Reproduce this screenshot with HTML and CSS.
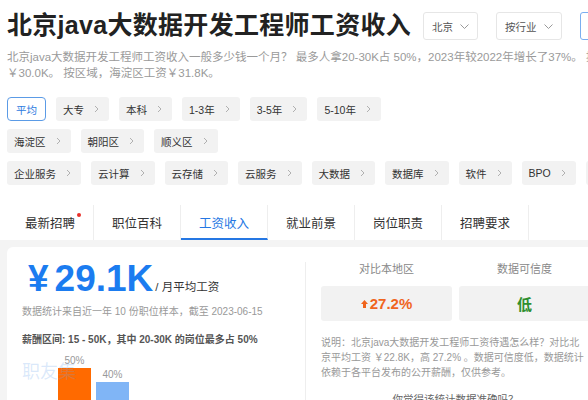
FILE: index.html
```html
<!DOCTYPE html>
<html lang="zh-CN">
<head>
<meta charset="utf-8">
<title>北京java大数据开发工程师工资收入</title>
<link rel="stylesheet" href="styles.css">
</head>
<body>
<div class="page">
  <div class="top">
    <div class="head">
      <h1 class="title">北京java大数据开发工程师工资收入</h1>
      <div class="select">北京<svg viewBox="0 0 9 5"><polyline points="0.5,0.5 4.5,4.5 8.5,0.5"/></svg></div>
      <div class="select">按行业<svg viewBox="0 0 9 5"><polyline points="0.5,0.5 4.5,4.5 8.5,0.5"/></svg></div>
      <div class="search"></div>
    </div>
    <p class="intro">北京java大数据开发工程师工资收入一般多少钱一个月？ 最多人拿20-30K占 50%，2023年较2022年增长了37%。 按学历，本科工资<br>￥30.0K。 按区域，海淀区工资￥31.8K。</p>

    <div class="tags first">
      <span class="tag on">平均</span>
      <span class="tag">大专<svg viewBox="0 0 5 8"><polyline points="1,1 4,4 1,7"/></svg></span>
      <span class="tag">本科<svg viewBox="0 0 5 8"><polyline points="1,1 4,4 1,7"/></svg></span>
      <span class="tag">1-3年<svg viewBox="0 0 5 8"><polyline points="1,1 4,4 1,7"/></svg></span>
      <span class="tag">3-5年<svg viewBox="0 0 5 8"><polyline points="1,1 4,4 1,7"/></svg></span>
      <span class="tag">5-10年<svg viewBox="0 0 5 8"><polyline points="1,1 4,4 1,7"/></svg></span>
    </div>
    <div class="tags">
      <span class="tag">海淀区<svg viewBox="0 0 5 8"><polyline points="1,1 4,4 1,7"/></svg></span>
      <span class="tag">朝阳区<svg viewBox="0 0 5 8"><polyline points="1,1 4,4 1,7"/></svg></span>
      <span class="tag">顺义区<svg viewBox="0 0 5 8"><polyline points="1,1 4,4 1,7"/></svg></span>
    </div>
    <div class="tags">
      <span class="tag">企业服务<svg viewBox="0 0 5 8"><polyline points="1,1 4,4 1,7"/></svg></span>
      <span class="tag">云计算<svg viewBox="0 0 5 8"><polyline points="1,1 4,4 1,7"/></svg></span>
      <span class="tag">云存储<svg viewBox="0 0 5 8"><polyline points="1,1 4,4 1,7"/></svg></span>
      <span class="tag">云服务<svg viewBox="0 0 5 8"><polyline points="1,1 4,4 1,7"/></svg></span>
      <span class="tag">大数据<svg viewBox="0 0 5 8"><polyline points="1,1 4,4 1,7"/></svg></span>
      <span class="tag">数据库<svg viewBox="0 0 5 8"><polyline points="1,1 4,4 1,7"/></svg></span>
      <span class="tag">软件<svg viewBox="0 0 5 8"><polyline points="1,1 4,4 1,7"/></svg></span>
      <span class="tag">BPO<svg viewBox="0 0 5 8"><polyline points="1,1 4,4 1,7"/></svg></span>
      <span class="tag">互联网<svg viewBox="0 0 5 8"><polyline points="1,1 4,4 1,7"/></svg></span>
    </div>
  </div>

  <nav class="tabs">
    <a class="tab"><span class="has-dot">最新招聘<i class="dot"></i></span></a>
    <a class="tab">职位百科</a>
    <a class="tab active">工资收入</a>
    <a class="tab">就业前景</a>
    <a class="tab">岗位职责</a>
    <a class="tab">招聘要求</a>
  </nav>

  <div class="main">
    <div class="card">
      <section class="left">
        <div class="amount"><span class="num"><span class="yen">¥</span>29.1K</span><span class="unit">/ 月平均工资</span></div>
        <p class="stat">数据统计来自近一年 10 份职位样本，截至 2023-06-15</p>
        <p class="range">薪酬区间: 15 - 50K，其中 20-30K 的岗位最多占 50%</p>
        <div class="chart">
          <div class="col"><span class="pct">50%</span><span class="bar orange" style="height:67px"></span></div>
          <div class="col"><span class="pct">40%</span><span class="bar blue" style="height:53px"></span></div>
          <span class="mark">职友集</span>
        </div>
      </section>
      <section class="right">
        <div class="cmp">
          <div class="cmp-col">
            <div class="cmp-label">对比本地区</div>
            <div class="cmp-box up"><svg viewBox="0 0 7 8"><path d="M3.5 0 L7 4 H5 V8 H2 V4 H0 Z"/></svg>27.2%</div>
          </div>
          <div class="cmp-col">
            <div class="cmp-label">数据可信度</div>
            <div class="cmp-box low">低</div>
          </div>
        </div>
        <p class="note">说明：北京java大数据开发工程师工资待遇怎么样？对比北<br>京平均工资 ￥22.8K，高 27.2% 。数据可信度低，数据统计<br>依赖于各平台发布的公开薪酬，仅供参考。</p>
        <p class="ask">你觉得该统计数据准确吗？</p>
      </section>
    </div>
  </div>
</div>
</body>
</html>
```

FILE: styles.css
```css
* { box-sizing: border-box; }

html, body {
  margin: 0;
  width: 588px;
  height: 400px;
  overflow: hidden;
  background: #fff;
}

body {
  font-family: "Liberation Sans", "Noto Sans CJK SC", sans-serif;
  color: #333;
}

.page { width: 640px; }

.top { padding: 12px 0 0 7px; }

.head {
  display: flex;
  align-items: center;
  height: 28px;
}

.title {
  margin: -3px 12px 0 0;
  font-size: 25px;
  line-height: 28px;
  letter-spacing: 0.3px;
  font-weight: 700;
  color: #222;
  white-space: nowrap;
}

.select {
  display: flex;
  align-items: center;
  gap: 7px;
  height: 28px;
  padding: 0 8px;
  margin-right: 18px;
  border: 1px solid #e6e6e6;
  border-radius: 3px;
  font-size: 10.5px;
  color: #555;
  white-space: nowrap;
}

.select svg {
  width: 9px;
  height: 5px;
  fill: none;
  stroke: #999;
  stroke-width: 1;
}

.search {
  width: 140px;
  height: 28px;
  flex: none;
  border: 1px solid #7aaef0;
  border-radius: 3px;
}

.intro {
  margin: 9px 0 0;
  font-size: 11.5px;
  line-height: 16px;
  color: #9a9a9a;
  white-space: nowrap;
}

.tags {
  display: flex;
  gap: 10px;
  margin-top: 8px;
}

.tags.first { margin-top: 16px; }

.tag {
  display: flex;
  align-items: center;
  flex: none;
  height: 24px;
  padding: 0 10px 0 7px;
  background: #f2f2f2;
  border-radius: 3px;
  font-size: 10.5px;
  color: #333;
  white-space: nowrap;
}

.tag svg {
  width: 5px;
  height: 8px;
  margin-left: 10px;
  fill: none;
  stroke: #b0b0b0;
  stroke-width: 1;
}

.tag.on {
  padding: 0 8px;
  background: #fff;
  border: 1px solid #5b9be6;
  border-radius: 4px;
  color: #2d7be0;
}

.tabs {
  display: flex;
  margin-top: 20px;
  padding-left: 7px;
  height: 35px;
}

.tab {
  display: flex;
  align-items: center;
  justify-content: center;
  width: 87px;
  height: 35px;
  border-right: 1px solid #eeeeee;
  font-size: 12.5px;
  color: #333;
}

.tab.active {
  color: #2577e3;
  border-bottom: 2px solid #2577e3;
  padding-top: 2px;
}

.has-dot { position: relative; }

.dot {
  position: absolute;
  right: -6px;
  top: 0;
  width: 4px;
  height: 4px;
  border-radius: 50%;
  background: #e8302a;
}

.main {
  background: #f4f4f4;
  padding: 7px 0 0 7px;
  height: 200px;
}

.card {
  display: flex;
  width: 600px;
  height: 200px;
  background: #fff;
  border-radius: 6px;
}

.left {
  width: 298px;
  flex: none;
  padding: 13px 15px 0;
}

.amount {
  display: flex;
  align-items: baseline;
  margin-left: 6px;
}

.num {
  font-family: "Liberation Sans", sans-serif;
  font-size: 37px;
  line-height: 37px;
  font-weight: 700;
  color: #1b7cf0;
}

.yen { margin-right: 6px; }

.unit {
  margin-left: 2px;
  font-size: 11.5px;
  color: #333;
}

.stat {
  margin: 7px 0 0;
  font-size: 10px;
  line-height: 15px;
  color: #999;
  white-space: nowrap;
}

.range {
  margin: 13px 0 0;
  font-size: 10px;
  line-height: 15px;
  font-weight: 700;
  color: #555;
  white-space: nowrap;
}

.chart {
  position: relative;
  display: flex;
  align-items: flex-end;
  gap: 5px;
  height: 80px;
  margin-top: 8px;
  padding-left: 36px;
}

.col {
  display: flex;
  flex-direction: column;
  align-items: center;
  width: 33px;
}

.pct {
  font-size: 10px;
  line-height: 12px;
  color: #999;
}

.bar {
  display: block;
  width: 33px;
  margin-top: 1px;
}

.bar.orange { background: #ff6a00; }
.bar.blue { background: #80b5f6; }

.mark {
  position: absolute;
  left: 0;
  top: 5px;
  font-family: "Noto Sans CJK SC", sans-serif;
  font-size: 18px;
  line-height: 20px;
  color: rgba(110, 165, 235, 0.25);
}

.right {
  width: 300px;
  flex: none;
  margin-top: 15px;
  padding: 0 15px;
  border-left: 1px solid #eeeeee;
}

.cmp {
  display: flex;
  gap: 7px;
}

.cmp-col { width: 131px; }

.cmp-label {
  font-size: 11px;
  line-height: 15px;
  color: #888;
  text-align: center;
}

.cmp-box {
  display: flex;
  align-items: center;
  justify-content: center;
  height: 35px;
  margin-top: 9px;
  background: #f2f2f2;
  border-radius: 3px;
  font-size: 15px;
  font-weight: 700;
}

.cmp-box.up { color: #f0651e; }

.cmp-box.up svg {
  width: 7px;
  height: 8px;
  margin-right: 2px;
  fill: #f0651e;
}

.cmp-box.low {
  color: #2f8f2f;
  font-size: 15px;
}

.note {
  margin: 14px 0 0;
  font-size: 10px;
  line-height: 15px;
  color: #999;
  white-space: nowrap;
}

.ask {
  margin: 12px 0 0;
  font-size: 10.5px;
  line-height: 15px;
  color: #666;
  text-align: center;
}
```
